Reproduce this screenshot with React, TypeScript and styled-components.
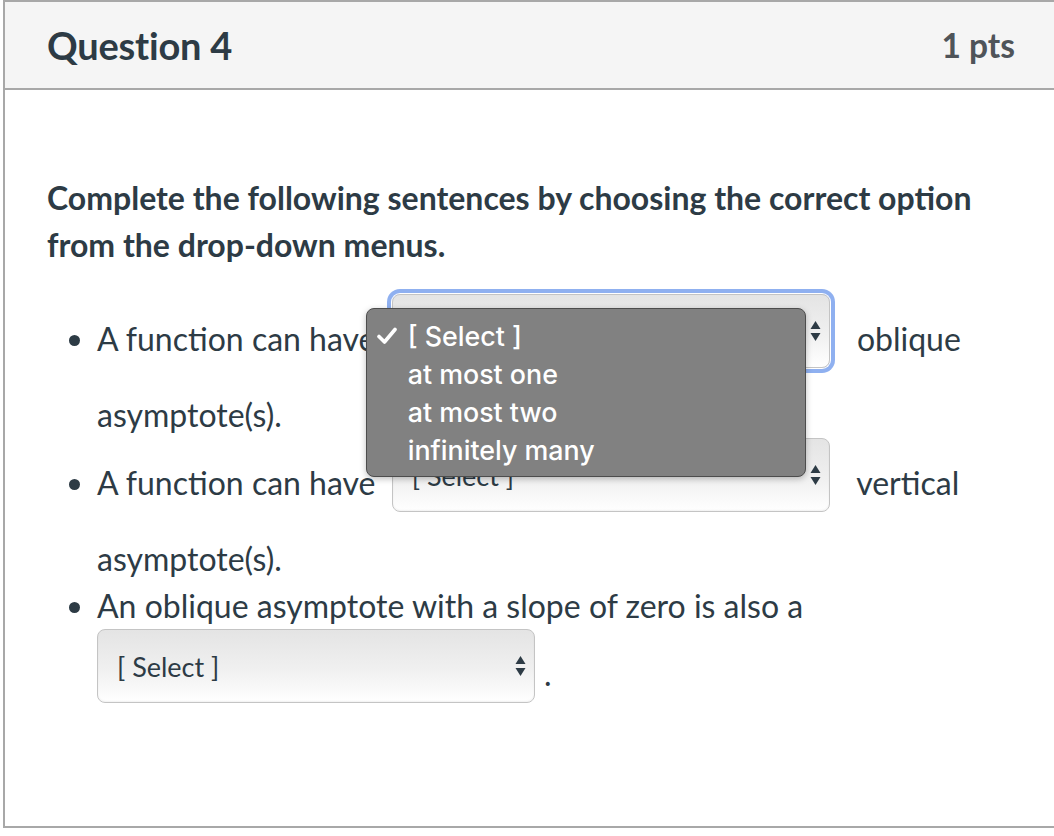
import React from 'react';
import styled, { createGlobalStyle } from 'styled-components';

const GlobalStyle = createGlobalStyle`
  html, body {
    margin: 0;
    padding: 0;
    background: #ffffff;
    overflow: hidden;
  }
  body {
    font-family: Lato, "Open Sans", sans-serif;
    color: #2d3b45;
  }
`;

const options = ['[ Select ]', 'at most one', 'at most two', 'infinitely many'];

const Arrows = () => (
  <svg width="11" height="22" viewBox="0 0 11 22">
    <polygon points="5.5,1 10.5,9 0.5,9" fill="#2d3b45" />
    <polygon points="0.5,13 10.5,13 5.5,21" fill="#2d3b45" />
  </svg>
);

const Check = () => (
  <svg width="20" height="18" viewBox="0 0 20 18">
    <path d="M2 9.5 L7.5 15 L18 2.5" stroke="#fff" strokeWidth="3.6" fill="none" strokeLinecap="round" strokeLinejoin="round" />
  </svg>
);

type SelectProps = { focused?: boolean; inline?: boolean; open?: boolean };

// inline: the select sits mid-sentence, with a word on both sides
const FakeSelect = ({ focused, inline, open }: SelectProps) => (
  <SelectWrap $inline={inline}>
    <SelectBox $focused={focused}>
      <SelectText>[ Select ]</SelectText>
      <Arrows />
    </SelectBox>
    {open && (
      <Menu>
        {options.map((o, i) => (
          <MenuItem key={o}>
            <CheckSlot>{i === 0 && <Check />}</CheckSlot>
            {o}
          </MenuItem>
        ))}
      </Menu>
    )}
  </SelectWrap>
);

const App = () => {
  return (
    <>
      <GlobalStyle />
      <QuestionCard>
        <Header>
          <Title>Question 4</Title>
          <Points>1 pts</Points>
        </Header>
        <Body>
          <Prompt>Complete the following sentences by choosing the correct option from the drop-down menus.</Prompt>
          <List>
            <Item>
              A function can have <FakeSelect inline focused open /> oblique asymptote(s).
            </Item>
            <Item>
              A function can have <FakeSelect inline /> vertical asymptote(s).
            </Item>
            <Item>
              An oblique asymptote with a slope of zero is also a <FakeSelect />.
            </Item>
          </List>
        </Body>
      </QuestionCard>
    </>
  );
};

const QuestionCard = styled.div`
  margin-left: 3px;
  width: 1060px;
  height: 828px;
  box-sizing: border-box;
  border-top: 2px solid #a8a8a8;
  border-left: 2px solid #a8a8a8;
  border-bottom: 2px solid #a8a8a8;
`;

const Header = styled.div`
  height: 88px;
  box-sizing: border-box;
  background: #f5f5f5;
  border-bottom: 2px solid #a8a8a8;
  display: flex;
  align-items: center;
  justify-content: space-between;
  padding: 0 48px 0 42px;
`;

const Title = styled.div`
  font-size: 38px;
  font-weight: 700;
  color: #2d3b45;
  letter-spacing: -0.2px;
`;

const Points = styled.div`
  font-size: 33.5px;
  font-weight: 700;
  color: #4f5459;
`;

const Body = styled.div`
  padding: 84px 48px 0 42px;
`;

const Prompt = styled.div`
  font-size: 32px;
  font-weight: 700;
  line-height: 47px;
  margin-bottom: 26px;
`;

const List = styled.ul`
  margin: 0;
  padding-left: 50px;
`;

const Item = styled.li`
  font-size: 32px;
  line-height: 47px;
`;

const SelectWrap = styled.span<{ $inline?: boolean }>`
  position: relative;
  display: inline-block;
  vertical-align: middle;
  margin: ${(p) => (p.$inline ? '0 19px 23px 8px' : '0 9px 23px 0')};
`;

const SelectBox = styled.span<{ $focused?: boolean }>`
  display: flex;
  align-items: center;
  justify-content: space-between;
  box-sizing: border-box;
  width: 438px;
  height: 74px;
  padding: 0 8px 0 19px;
  border: 1px solid #c4c4c4;
  border-radius: 8px;
  background: linear-gradient(#e4e4e4, #f0f0f0 55%, #ffffff);
  box-shadow: ${(p) =>
    p.$focused
      ? '0 0 0 1px #ffffff, 0 0 0 5px #8fb0f0'
      : 'inset 0 -1px 2px rgba(0,0,0,0.06)'};
`;

const SelectText = styled.span`
  font-size: 27px;
  line-height: 1;
  color: #2d3b45;
`;

const Menu = styled.div`
  position: absolute;
  left: -26px;
  top: 14px;
  width: 440px;
  box-sizing: border-box;
  padding: 8px 0 7px;
  background: #818181;
  border: 1px solid #4d4d4d;
  border-radius: 8px;
  box-shadow: 0 2px 6px rgba(0, 0, 0, 0.25);
  z-index: 2;
`;

const MenuItem = styled.div`
  display: flex;
  align-items: center;
  height: 38px;
  font-family: Inter, "Liberation Sans", sans-serif;
  font-size: 26.8px;
  font-weight: 500;
  color: #ffffff;
`;

const CheckSlot = styled.span`
  display: inline-flex;
  justify-content: center;
  width: 41px;
`;

export default App;
